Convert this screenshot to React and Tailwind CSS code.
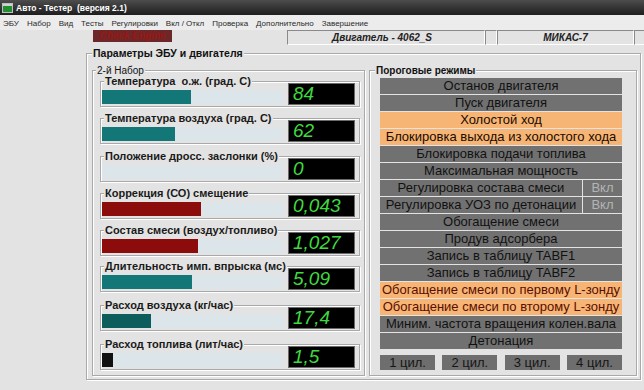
import React from 'react';

const menu = ['ЭБУ', 'Набор', 'Вид', 'Тесты', 'Регулировки', 'Вкл / Откл', 'Проверка', 'Дополнительно', 'Завершение'];

const params = [
  { label: 'Температура  о.ж. (град. С)', value: '84', bar: 'w-[89px] bg-[#137777]', h: 'h-[37px]' },
  { label: 'Температура воздуха (град. С)', value: '62', bar: 'w-[73px] bg-[#137777]', h: 'h-[38px]' },
  { label: 'Положение дросс. заслонки (%)', value: '0', bar: 'w-0', h: 'h-[37px]' },
  { label: 'Коррекция (СО) смещение', value: '0,043', bar: 'w-[99px] bg-[#8c0c0c]', h: 'h-[37px]' },
  { label: 'Состав смеси (воздух/топливо)', value: '1,027', bar: 'w-[96px] bg-[#8c0c0c]', h: 'h-[36px]' },
  { label: 'Длительность имп. впрыска (мс)', value: '5,09', bar: 'w-[90px] bg-[#137777]', h: 'h-[39px]' },
  { label: 'Расход воздуха (кг/час)', value: '17,4', bar: 'w-[49px] bg-[#0d5d5d]', h: 'h-[39px]' },
  { label: 'Расход топлива (лит/час)', value: '1,5', bar: 'w-[11px] bg-[#111111]', h: 'h-[31px]' },
];

// kind: g = gray, o = orange, l = orange with dark red text, v = gray with "Вкл" cell
const modes = [
  ['Останов двигателя', 'g'],
  ['Пуск двигателя', 'g'],
  ['Холостой ход', 'o'],
  ['Блокировка выхода из холостого хода', 'o'],
  ['Блокировка подачи топлива', 'g'],
  ['Максимальная мощность', 'g'],
  ['Регулировка состава смеси', 'v'],
  ['Регулировка УОЗ по детонации', 'v'],
  ['Обогащение смеси', 'g'],
  ['Продув адсорбера', 'g'],
  ['Запись в таблицу TABF1', 'g'],
  ['Запись в таблицу TABF2', 'g'],
  ['Обогащение смеси по первому L-зонду', 'l'],
  ['Обогащение смеси по второму L-зонду', 'l'],
  ['Миним. частота вращения колен.вала', 'g'],
  ['Детонация', 'g'],
];

const Param = ({ p }) => (
  <div className={`${p.h} pt-[5px]`}>
    <div className="ml-[7px] mr-[4px] h-[26px] border border-[#a9a9a9] shadow-[inset_1px_1px_0_#fff,1px_1px_0_#fff]">
      <div className="flex">
        <div className="w-[185px]">
          <div className="-mt-[6px] h-[10px] ml-[3px] flex">
            <span className="bg-[#e3e3e3] px-[1px] text-[11px] leading-[10px] font-bold text-[#1a1a1a] whitespace-pre">{p.label}</span>
          </div>
          <div className="mt-[4px] ml-[1px] w-[181px] h-[14px] bg-[#dbe5ea]">
            <div className={`h-full ${p.bar}`} />
          </div>
        </div>
        <div className="mt-[1px] ml-[2px] w-[67px] h-[22px] bg-black border border-[#6a6a6a] pl-[4px] text-[19px] leading-[20px] italic text-[#3fd93f]">
          {p.value}
        </div>
      </div>
    </div>
  </div>
);

const ModeRow = ({ text, kind }) => {
  if (kind === 'v') {
    return (
      <div className="flex gap-px h-[16px]">
        <div className="flex-1 bg-[#717171] text-center text-[13px] leading-[16px] text-[#111]">{text}</div>
        <div className="w-[39px] bg-[#717171] text-center text-[13px] leading-[16px] text-[#b4b4b4]">Вкл</div>
      </div>
    );
  }
  const cls =
    kind === 'o'
      ? 'bg-[#f6b574] text-[#1a0a00]'
      : kind === 'l'
      ? 'bg-[#f6b574] text-[#5a0d00]'
      : 'bg-[#717171] text-[#111]';
  return (
    <div className={`h-[16px] text-center text-[13px] leading-[16px] whitespace-nowrap ${cls}`}>{text}</div>
  );
};

export default function App() {
  return (
    <div className="w-[644px] h-[390px] overflow-hidden bg-[#e3e3e3] font-['Liberation_Sans',Arial,sans-serif]">
      {/* title bar */}
      <div className="h-[15px] flex items-center bg-gradient-to-b from-[#4d4d4d] to-[#1e1e1e]">
        <div className="ml-[2px] w-[11px] h-[10px] border border-[#bfbfbf] bg-[#1f8f2f] flex flex-col">
          <div className="h-[2px] bg-[#d0d0d0]" />
        </div>
        <span className="ml-[3px] text-[8.5px] leading-[12px] font-bold text-white whitespace-pre">Авто - Тестер  (версия 2.1)</span>
      </div>

      {/* menu bar */}
      <div className="h-[15px] flex items-end gap-[8px] pl-[3px] pb-[1px] bg-[#ececec]">
        {menu.map((m) => (
          <span key={m} className="text-[8px] leading-[11px] text-[#2a2a2a]">{m}</span>
        ))}
      </div>

      {/* status strip */}
      <div className="h-[16px] flex items-start">
        <div className="ml-[93px] w-[79px] h-[12px] bg-[#6c2828] text-center text-[10px] leading-[12px] italic font-bold text-[#9c1515]">
          Check Engine
        </div>
        <div className="ml-[115px] w-[198px] h-[15px] border border-t-[#8a8a8a] border-l-[#8a8a8a] border-b-white border-r-white flex items-center justify-center pr-[8px]">
          <span className="text-[10px] italic font-bold text-[#222]">Двигатель - 4062_S</span>
        </div>
        <div className="w-[12px] h-[15px] border border-t-[#8a8a8a] border-l-[#8a8a8a] border-b-white border-r-white" />
        <div className="w-[137px] h-[15px] border border-t-[#8a8a8a] border-l-[#8a8a8a] border-b-white border-r-white flex items-center justify-center">
          <span className="text-[10px] italic font-bold text-[#222]">МИКАС-7</span>
        </div>
        <div className="flex-1 h-[15px] border border-t-[#8a8a8a] border-l-[#8a8a8a] border-b-white border-r-0" />
      </div>

      {/* main frame */}
      <div className="pt-[7px]">
        <div className="ml-[86px] mr-[3px] h-[327px] border border-[#a9a9a9] shadow-[inset_1px_1px_0_#fff,1px_1px_0_#fff]">
          <div className="-mt-[7px] h-[12px] ml-[5px] flex">
            <span className="bg-[#e3e3e3] px-[1px] text-[10.5px] leading-[12px] font-bold text-[#111]">Параметры ЭБУ и двигателя</span>
          </div>

          <div className="flex mt-[11px] ml-[5px] gap-[4px]">
            {/* left group */}
            <div className="w-[273px] h-[306px] border border-[#a9a9a9] shadow-[inset_1px_1px_0_#fff,1px_1px_0_#fff]">
              <div className="-mt-[6px] h-[11px] ml-[3px] flex">
                <span className="bg-[#e3e3e3] px-[1px] text-[10px] leading-[11px] text-[#111]">2-й Набор</span>
              </div>
              {params.map((p) => (
                <Param key={p.label} p={p} />
              ))}
            </div>

            {/* right group */}
            <div className="w-[268px] h-[306px] border border-[#a9a9a9] shadow-[inset_1px_1px_0_#fff,1px_1px_0_#fff]">
              <div className="-mt-[6px] h-[11px] ml-[5px] flex">
                <span className="bg-[#e3e3e3] px-[1px] text-[10px] leading-[11px] font-bold text-[#111]">Пороговые режимы</span>
              </div>
              <div className="mt-[2px] ml-[10px] w-[242px] flex flex-col gap-px">
                {modes.map(([t, k]) => (
                  <ModeRow key={t} text={t} kind={k} />
                ))}
              </div>
              <div className="mt-[6px] ml-[10px] w-[242px] flex justify-between">
                {['1 цил.', '2 цил.', '3 цил.', '4 цил.'].map((c) => (
                  <div key={c} className="w-[55px] h-[15px] bg-[#6e6e6e] text-center text-[13px] leading-[15px] text-[#151515]">{c}</div>
                ))}
              </div>
            </div>
          </div>
        </div>
      </div>
    </div>
  );
}
